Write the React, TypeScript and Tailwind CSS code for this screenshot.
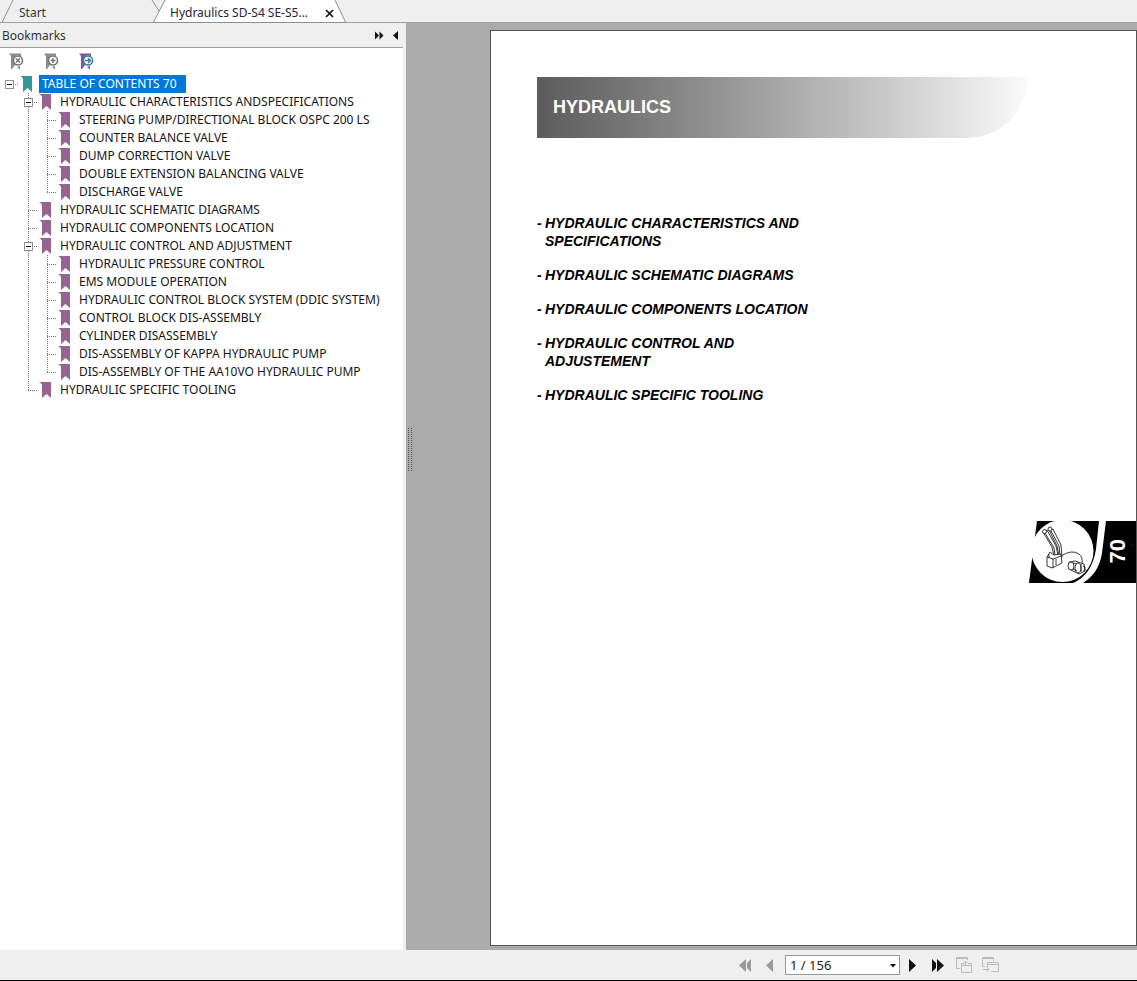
import { useState } from "react";

type Bookmark = {
  title: string;
  children?: Bookmark[];
};

const bookmarks: Bookmark = {
  title: "TABLE OF CONTENTS 70",
  children: [
    {
      title: "HYDRAULIC CHARACTERISTICS ANDSPECIFICATIONS",
      children: [
        { title: "STEERING PUMP/DIRECTIONAL BLOCK OSPC 200 LS" },
        { title: "COUNTER BALANCE VALVE" },
        { title: "DUMP CORRECTION VALVE" },
        { title: "DOUBLE EXTENSION BALANCING VALVE" },
        { title: "DISCHARGE VALVE" },
      ],
    },
    { title: "HYDRAULIC SCHEMATIC DIAGRAMS" },
    { title: "HYDRAULIC COMPONENTS LOCATION" },
    {
      title: "HYDRAULIC CONTROL AND ADJUSTMENT",
      children: [
        { title: "HYDRAULIC PRESSURE CONTROL" },
        { title: "EMS MODULE OPERATION" },
        { title: "HYDRAULIC CONTROL BLOCK SYSTEM (DDIC SYSTEM)" },
        { title: "CONTROL BLOCK DIS-ASSEMBLY" },
        { title: "CYLINDER DISASSEMBLY" },
        { title: "DIS-ASSEMBLY OF KAPPA HYDRAULIC PUMP" },
        { title: "DIS-ASSEMBLY OF THE AA10VO HYDRAULIC PUMP" },
      ],
    },
    { title: "HYDRAULIC SPECIFIC TOOLING" },
  ],
};

const chapters = [
  ["HYDRAULIC CHARACTERISTICS AND", "SPECIFICATIONS"],
  ["HYDRAULIC SCHEMATIC DIAGRAMS"],
  ["HYDRAULIC COMPONENTS LOCATION"],
  ["HYDRAULIC CONTROL AND", "ADJUSTEMENT"],
  ["HYDRAULIC SPECIFIC TOOLING"],
];

// One 19px wide column of dotted guide lines in the tree
function Guide({ up, down, right }: { up?: boolean; down?: boolean; right?: boolean }) {
  return (
    <svg width="19" height="18" className="block" stroke="#777" strokeDasharray="1 1" aria-hidden="true">
      {up && <path d="M9.5 0V9" />}
      {down && <path d="M9.5 10V18" />}
      {right && <path d="M9 9.5H19" />}
    </svg>
  );
}

function Flag({ color }: { color: string }) {
  return (
    <svg width="14" height="18" viewBox="0 0 14 18" className="ml-px shrink-0" aria-hidden="true">
      <path d="M0 1H12V17L7.500 13 3 17V4Q2.500 2 0 1Z" fill={color} />
    </svg>
  );
}

type NodeProps = {
  node: Bookmark;
  trail: boolean[]; // for each ancestor column, whether its line carries on
  last: boolean;
  selected: string;
  onSelect: (title: string) => void;
};

function TreeNode({ node, trail, last, selected, onSelect }: NodeProps) {
  const [open, setOpen] = useState(true);
  const root = trail.length === 0;
  const active = selected === node.title;

  return (
    <li>
      <div className="flex h-[18px] items-center">
        {trail.map((on, i) => (
          <Guide key={i} up={on} down={on} />
        ))}
        <div className="relative">
          <Guide up={!root} down={!root && !last} right />
          {node.children && (
            <button
              aria-label={open ? `Collapse ${node.title}` : `Expand ${node.title}`}
              onClick={() => setOpen(!open)}
              className="absolute left-[5px] top-[5px] flex size-[9px] items-center justify-center border border-[#919191] bg-white"
            >
              <span className="h-px w-[5px] bg-[#111]" />
            </button>
          )}
        </div>
        <Flag color={root ? "#359794" : "#966493"} />
        <button
          onClick={() => onSelect(node.title)}
          className={`h-[18px] whitespace-nowrap pl-[3px] leading-[18px] ${root ? "ml-[5px]" : "ml-1"} ${active ? "bg-[#0078d7] pr-[9px] text-white" : "pr-[3px] text-[#151515]"}`}
        >
          {node.title}
        </button>
      </div>
      {node.children && open && (
        <ul>
          {node.children.map((child, i) => (
            <TreeNode
              key={child.title}
              node={child}
              trail={root ? [false] : [...trail, !last]}
              last={i === node.children!.length - 1}
              selected={selected}
              onSelect={onSelect}
            />
          ))}
        </ul>
      )}
    </li>
  );
}

function ToolIcon({ kind }: { kind: "delete" | "add" | "go" }) {
  const go = kind === "go";
  const ring = go ? "#347f9f" : "#757575";
  return (
    <svg width="16" height="17" viewBox="0 0 16 17" className="block" fill="none" aria-hidden="true">
      <path d="M0 .5H12V4L6 12 3 16H2V4Q2 2 0 .5ZM8 14L11 13V16.500Z" fill={go ? "#7c559f" : "#8b8b8b"} />
      <circle cx="9" cy="7.500" r="5" fill="#fff" />
      <circle cx="9" cy="7.500" r="4.500" stroke={ring} strokeWidth="1.500" />
      {kind === "delete" && <path d="M7 5.500l4 4m0-4l-4 4" stroke={ring} strokeWidth="1.500" />}
      {kind === "add" && <path d="M9 5v5M6.500 7.500h5" stroke={ring} strokeWidth="1.500" />}
      {go && <path d="M6 7.500h5.500M9 5l2.500 2.500L9 10" stroke={ring} strokeWidth="1.500" />}
    </svg>
  );
}

function Tabs() {
  return (
    <nav className="flex h-[23px] border-b border-[#a0a0a0] bg-[#efefef]">
      <button className="relative h-[23px] w-[153px] pl-[19px] pt-[3px] text-left text-[#333]">
        <svg width="166" height="23" className="absolute left-0 top-0" fill="none" stroke="#8e8e8e" aria-hidden="true">
          <path d="M2 22.500L13 0M152 0L159 11" />
        </svg>
        <span className="relative">Start</span>
      </button>
      <div className="relative flex h-[23px] w-[194px] items-center pl-[17px] pt-[3px]">
        <svg width="194" height="23" className="absolute left-0 top-0" aria-hidden="true">
          <path d="M0 22L12 0H182L193 22Z" fill="#fff" />
          <path d="M0 23L12 0M182 0L193 23M0 22.500H193" fill="none" stroke="#8e8e8e" />
        </svg>
        <button className="relative w-[147px] truncate text-left text-[#22223a]">Hydraulics SD-S4 SE-S5...</button>
        <button aria-label="Close tab" className="relative ml-2">
          <svg width="9" height="9" stroke="#111" strokeWidth="1.700" aria-hidden="true">
            <path d="M1 1l7 7M8 1l-7 7" />
          </svg>
        </button>
      </div>
    </nav>
  );
}

function BookmarksPanel() {
  const [selected, setSelected] = useState(bookmarks.title);

  return (
    <aside className="w-[406px] shrink-0 border-r-[3px] border-[#efefef] bg-white">
      <header className="flex h-[25px] items-center justify-between border-b border-[#a0a0a0] bg-[#efefef] pl-0.5 pr-1 pt-px text-[#333]">
        <h2>Bookmarks</h2>
        <div className="flex gap-2">
          <button aria-label="Expand panel">
            <svg width="9" height="9" fill="#111" aria-hidden="true">
              <path d="M0 0.500L4 4.500 0 8.500ZM4.500 0.500L8.500 4.500 4.500 8.500Z" />
            </svg>
          </button>
          <button aria-label="Collapse panel">
            <svg width="7" height="9" fill="#111" aria-hidden="true">
              <path d="M6 0V9L1 4.500Z" />
            </svg>
          </button>
        </div>
      </header>
      <div className="flex h-[27px] items-center gap-[19px] pl-[9px]">
        <button aria-label="Delete bookmark"><ToolIcon kind="delete" /></button>
        <button aria-label="Add bookmark"><ToolIcon kind="add" /></button>
        <button aria-label="Go to bookmark"><ToolIcon kind="go" /></button>
      </div>
      <ul>
        <TreeNode node={bookmarks} trail={[]} last selected={selected} onSelect={setSelected} />
      </ul>
    </aside>
  );
}

function ChapterBadge() {
  return (
    <div className="relative mt-[117px] h-[62px] w-[107px] self-end">
      <svg width="107" height="62" viewBox="0 0 107 62" className="block" fill="none" aria-hidden="true">
        <path d="M8 0H70L67 28Q63 54 44 62H0Z" fill="#000" />
        <path d="M77 0H107V62H54Q70 52 73 32Z" fill="#000" />
        <circle cx="33.500" cy="30" r="31" fill="#fff" />
        <g stroke="#222" strokeWidth=".9" fill="#fff" strokeLinejoin="round">
          <path d="M14 11L18 9 27 25 29 34 25 35 23 26Z" />
          <path d="M20 9L24 8 32 24 33 36 30 35 28 25Z" />
          <path d="M16 12l9 15 1 7M22 10l8 15 1 9" fill="none" />
          <circle cx="15.500" cy="10.500" r="2" />
          <circle cx="21" cy="8" r="2" />
          <path d="M18 36L21 31 25 34 32 33 33 42 23 47 18 45Z" />
          <path d="M18 36L24 38 32 35M24 38V47M20 33v4M27 38v6" fill="none" />
          <path d="M32 35Q43 28 50 33 54 36 53 42" fill="none" />
          <path d="M40 41L46 40 55 43 56 50 50 53 40 48Z" />
          <ellipse cx="42" cy="45" rx="3" ry="4" />
          <ellipse cx="49" cy="47" rx="3" ry="5" />
          <path d="M44 42l4 1M44 48l4 2M52 43v8M54 45l2 1v3l-2 1" fill="none" />
        </g>
      </svg>
      <span className="absolute right-1.5 top-[18px] rotate-180 text-[22px] font-bold leading-6 text-white [writing-mode:vertical-rl]">70</span>
    </div>
  );
}

function DocumentView() {
  return (
    <main className="flex min-w-0 flex-1 items-stretch bg-[#ababab] pb-1 pt-[7px]">
      {/* Splitter grip */}
      <div className="mb-[76px] ml-[2px] w-[5px] self-center" aria-hidden="true">
        <svg width="5" height="44" className="block" stroke="#555" strokeDasharray="1 1">
          <path d="M.5 0V44M3.500 0V44" />
        </svg>
      </div>
      <article className="ml-[77px] flex flex-1 flex-col border border-[#555] bg-white font-['Liberation_Sans',Arial,sans-serif]">
        <div className="ml-[46px] mr-[108px] mt-[46px] flex h-[61px] items-center rounded-br-[64px] bg-linear-to-r from-[#5c5c5c] to-[#fafafa] pl-4">
          <h1 className="text-[18px] font-bold text-white">HYDRAULICS</h1>
        </div>
        <ul className="ml-[46px] mt-[76px] flex flex-col gap-4 text-[14px] font-bold italic leading-[18px] text-black">
          {chapters.map((lines) => (
            <li key={lines[0]} className="flex">
              <span className="w-2">-</span>
              <span>
                {lines.map((line) => (
                  <span key={line} className="block">{line}</span>
                ))}
              </span>
            </li>
          ))}
        </ul>
        <ChapterBadge />
      </article>
    </main>
  );
}

function StatusBar() {
  return (
    <footer className="flex h-[31px] items-center border-b border-black bg-[#efefef] pl-[739px]">
      <button aria-label="First page">
        <svg width="13" height="13" fill="#999" aria-hidden="true">
          <path d="M7 0V13L0 6.500ZM12 0V13L8 9V4Z" />
        </svg>
      </button>
      <button aria-label="Previous page" className="ml-[14px]">
        <svg width="8" height="13" fill="#999" aria-hidden="true">
          <path d="M7 0V13L0 6.500Z" />
        </svg>
      </button>
      <div className="relative ml-[11px]">
        <select aria-label="Page" className="block h-[20px] w-[115px] appearance-none border border-[#999] bg-white pl-1 text-[13px] text-[#222]">
          <option>1 / 156</option>
        </select>
        <svg width="6" height="4" className="pointer-events-none absolute right-1 top-[9px]" fill="#111" aria-hidden="true">
          <path d="M0 0H6L3 3.500Z" />
        </svg>
      </div>
      <button aria-label="Next page" className="ml-[9px]">
        <svg width="8" height="13" fill="#111" aria-hidden="true">
          <path d="M0 0V13L7 6.500Z" />
        </svg>
      </button>
      <button aria-label="Last page" className="ml-[15px]">
        <svg width="13" height="13" fill="#111" aria-hidden="true">
          <path d="M5 0V13L12 6.500ZM0 0V13L4 9V4Z" />
        </svg>
      </button>
      <button aria-label="Previous view" className="ml-[11px]">
        <svg width="17" height="16" fill="none" stroke="#bbb" aria-hidden="true">
          <path d="M4 11.500H.5V.5H11.500V3M.5 1.500H11" />
          <path d="M8 6.500H5.500V15.500H15.500V6.500H12M6 8.500H15M9.500 8V4M7.500 6L9.500 4l2 2" />
        </svg>
      </button>
      <button aria-label="Next view" className="ml-[9px]">
        <svg width="17" height="16" fill="none" stroke="#bbb" aria-hidden="true">
          <path d="M3 9.500H.5V.5H11.500V4M.5 1.500H11" />
          <path d="M5.500 10V5.500H16.500V14.500H9M6 7.500H16M1 12.500H7M4.500 10L7 12.500 4.500 15" />
        </svg>
      </button>
    </footer>
  );
}

export default function App() {
  return (
    <div className="flex min-h-screen flex-col bg-[#efefef] font-['Noto_Sans',Tahoma,sans-serif] text-[12px]">
      <Tabs />
      <div className="flex flex-1">
        <BookmarksPanel />
        <DocumentView />
      </div>
      <StatusBar />
    </div>
  );
}
